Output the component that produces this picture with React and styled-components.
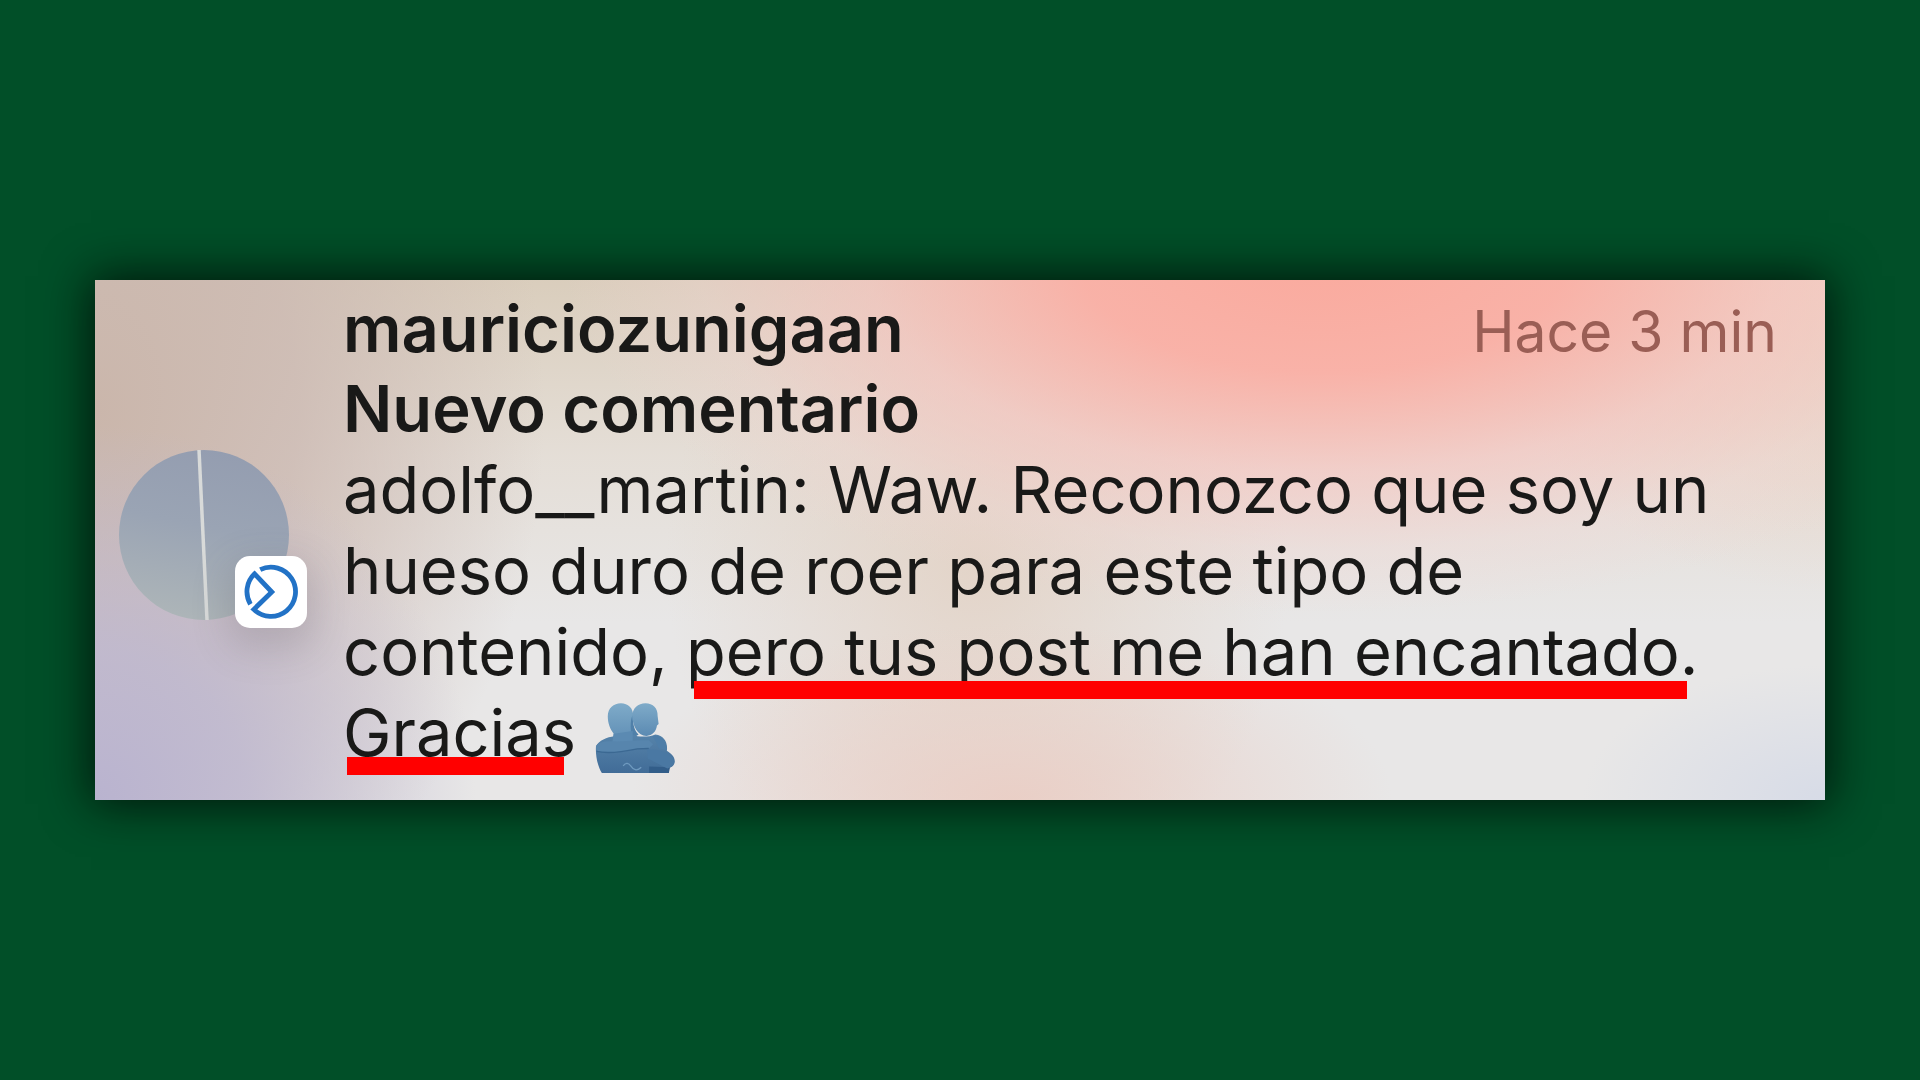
import React from 'react'
import styled, { createGlobalStyle } from 'styled-components'

const GlobalStyle = createGlobalStyle`
  * {
    box-sizing: border-box;
  }

  body {
    margin: 0;
    background: #014f28;
    font-family: Inter, 'Liberation Sans', sans-serif;
  }
`

const Page = styled.main`
  min-height: 100vh;
  padding: 48px 95px;
  display: flex;
  align-items: center;
`

const Card = styled.article`
  flex: 1;
  padding: 9px 48px 26px 24px;
  display: flex;
  align-items: center;
  gap: 54px;
  color: #191918;
  background:
    radial-gradient(ellipse 44% 68% at 71% -4%, #faaa9e 0%, rgba(251, 175, 165, 0.92) 32%, rgba(249, 196, 192, 0.6) 60%, rgba(244, 212, 210, 0.3) 82%, rgba(244, 216, 214, 0) 100%),
    radial-gradient(ellipse 20% 60% at 100% 0%, rgba(238, 208, 192, 0.9), rgba(236, 216, 204, 0)),
    radial-gradient(ellipse 22% 34% at 53% 100%, rgba(234, 205, 196, 0.9), rgba(232, 215, 207, 0)),
    radial-gradient(ellipse 18% 70% at 51% 55%, rgba(226, 208, 194, 0.8), rgba(226, 208, 194, 0)),
    radial-gradient(ellipse 14% 26% at 100% 100%, rgba(213, 218, 231, 0.9), rgba(222, 224, 230, 0)),
    radial-gradient(ellipse 22% 72% at 0% 100%, #b9b3cf 0%, rgba(190, 184, 208, 0.85) 40%, rgba(205, 202, 218, 0) 100%),
    radial-gradient(ellipse 26% 110% at 0% 25%, #cab6ab 0%, rgba(203, 184, 177, 0.8) 45%, rgba(212, 204, 203, 0) 100%),
    linear-gradient(180deg, rgba(217, 204, 186, 0.95) 0%, rgba(226, 216, 204, 0.6) 34%, rgba(230, 228, 226, 0) 66%),
    #e8e7e7;
  box-shadow: 0 0 44px 4px rgba(0, 10, 4, 0.82);
`

const Avatar = styled.div`
  position: relative;
  flex: none;
  width: 170px;
  height: 170px;
  margin-top: 6px;
  border-radius: 50%;
`

const AvatarPhoto = styled.svg`
  display: block;
  width: 100%;
  height: 100%;
`

const Badge = styled.span`
  position: absolute;
  right: -18px;
  bottom: -8px;
  width: 72px;
  height: 72px;
  border-radius: 15px;
  background: #fff;
  box-shadow: 0 14px 36px 8px rgba(90, 85, 95, 0.2);
`

const Content = styled.div`
  flex: 1;
  min-width: 0;
`

const Header = styled.header`
  display: flex;
  align-items: baseline;
  justify-content: space-between;
`

const Title = styled.h2`
  margin: 0;
  font-size: 65px;
  font-weight: 600;
  line-height: 80px;
`

const Time = styled.time`
  font-size: 57px;
  line-height: 64px;
  color: #9a5e55;
`

const Comment = styled.p`
  margin: 0;
  font-size: 65px;
  line-height: 81px;
`

const Marked = styled.span`
  position: relative;
  white-space: nowrap;

  &::after {
    content: '';
    position: absolute;
    left: ${({ $left }) => $left};
    right: 12px;
    bottom: ${({ $bottom }) => $bottom};
    height: 18px;
    background: #ff0000;
  }
`

const Hug = styled.svg`
  width: 82px;
  height: 72px;
  vertical-align: -18px;
`

const Photo = () => {
  return (
    <AvatarPhoto viewBox="0 0 170 170" role="img" aria-label="Foto de perfil">
      <defs>
        <linearGradient id="sky" x1="0.6" y1="0" x2="0.4" y2="1">
          <stop offset="0" stopColor="#949db0" />
          <stop offset="0.45" stopColor="#9aa4b4" />
          <stop offset="1" stopColor="#adb5b8" />
        </linearGradient>
      </defs>
      <circle cx="85" cy="85" r="85" fill="url(#sky)" />
      <path d="M80 0 L84 85 L88 170" fill="none" stroke="#d8dad9" strokeWidth="3.5" />
    </AvatarPhoto>
  )
}

const SuiteLogo = () => {
  return (
    <svg viewBox="0 0 72 72" width="72" height="72" aria-hidden="true">
      <g fill="none" stroke="#2272c6" strokeWidth="4.8">
        <path d="M25.2 13.6 A24.6 24.6 0 1 1 18.8 53.4 L36.8 36 L19.6 17.8 A24.6 24.6 0 0 0 15.4 48.2" />
      </g>
    </svg>
  )
}

const HugIcon = () => {
  return (
    <Hug viewBox="48 62 250 218" role="img" aria-label="Abrazo">
      <defs>
        <linearGradient id="head" x1="0" y1="0" x2="0" y2="1">
          <stop offset="0" stopColor="#7fabc9" />
          <stop offset="1" stopColor="#5b8ab2" />
        </linearGradient>
        <linearGradient id="torso" x1="0" y1="0" x2="0" y2="1">
          <stop offset="0" stopColor="#5683aa" />
          <stop offset="1" stopColor="#416c97" />
        </linearGradient>
      </defs>
      <path d="M90 105 C90 80 108 65 130 65 C152 65 168 80 168 105 C168 128 166 140 168 165 L168 195 L104 195 L108 158 C97 144 90 126 90 105Z" fill="url(#head)" />
      <path d="M165 102 C167 125 169 148 184 160 L166 172 C158 150 158 120 165 102Z" fill="#5080a9" />
      <path d="M165 105 C165 80 182 65 205 65 C228 65 243 80 242 104 L245 128 L240 133 C237 152 226 163 208 165 C182 165 165 134 165 105Z" fill="url(#head)" />
      <path d="M54 196 C62 180 88 168 110 166 C130 174 150 172 165 160 C185 170 214 168 235 160 C262 164 274 184 270 210 C288 220 296 234 294 245 C292 256 284 260 276 262 L276 278 L72 278 C60 258 52 228 54 196Z" fill="url(#torso)" />
      <path d="M108 158 L166 150 L166 184 L104 184Z" fill="#5b8ab2" />
      <path d="M225 166 C248 158 270 176 270 208 L246 203 C240 190 236 178 225 166Z" fill="#4d7da8" />
      <path d="M54 196 C62 182 84 178 120 182 L190 178 L215 178 L228 190 L216 202 L180 204 C140 215 84 222 55 208Z" fill="#5785ad" />
      <path d="M56 212 C94 220 142 212 180 204 L215 203" fill="none" stroke="#3b6892" strokeWidth="4" />
      <path d="M216 258 L280 260 L276 278 L216 278Z" fill="#325d89" />
      <path d="M210 207 C240 202 270 214 286 228 C300 246 288 260 272 264 C252 256 238 244 212 234" fill="#4a78a3" />
      <path d="M137 256 C144 246 153 246 160 256 C168 268 178 274 192 260" fill="none" stroke="#6f9abf" strokeWidth="4" />
    </Hug>
  )
}

const App = () => {
  return (
    <>
      <GlobalStyle />
      <Page>
        <Card>
          <Avatar>
            <Photo />
            <Badge>
              <SuiteLogo />
            </Badge>
          </Avatar>
          <Content>
            <Header>
              <Title>mauriciozunigaan</Title>
              <Time>Hace 3 min</Time>
            </Header>
            <Title as="h3">Nuevo comentario</Title>
            <Comment>
              adolfo__martin: Waw. Reconozco que soy un hueso duro de roer para
              este tipo de contenido,{' '}
              <Marked $left="8px" $bottom="-8px">
                pero tus post me han encantado.
              </Marked>{' '}
              <Marked $left="4px" $bottom="-3px">
                Gracias
              </Marked>{' '}
              <HugIcon />
            </Comment>
          </Content>
        </Card>
      </Page>
    </>
  )
}

export default App
